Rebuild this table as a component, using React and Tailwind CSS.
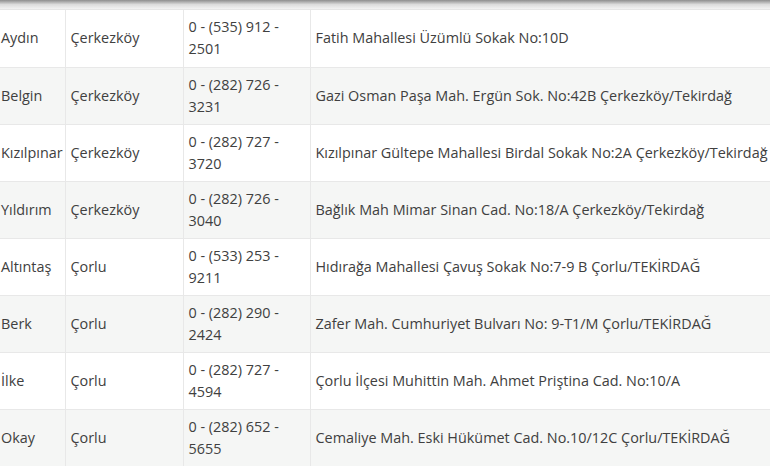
import React from 'react';

const rows = [
  ['Aydın', 'Çerkezköy', '0 - (535) 912 - 2501', 'Fatih Mahallesi Üzümlü Sokak No:10D'],
  ['Belgin', 'Çerkezköy', '0 - (282) 726 - 3231', 'Gazi Osman Paşa Mah. Ergün Sok. No:42B Çerkezköy/Tekirdağ'],
  ['Kızılpınar', 'Çerkezköy', '0 - (282) 727 - 3720', 'Kızılpınar Gültepe Mahallesi Birdal Sokak No:2A Çerkezköy/Tekirdağ'],
  ['Yıldırım', 'Çerkezköy', '0 - (282) 726 - 3040', 'Bağlık Mah Mimar Sinan Cad. No:18/A Çerkezköy/Tekirdağ'],
  ['Altıntaş', 'Çorlu', '0 - (533) 253 - 9211', 'Hıdırağa Mahallesi Çavuş Sokak No:7-9 B Çorlu/TEKİRDAĞ'],
  ['Berk', 'Çorlu', '0 - (282) 290 - 2424', 'Zafer Mah. Cumhuriyet Bulvarı No: 9-T1/M Çorlu/TEKİRDAĞ'],
  ['İlke', 'Çorlu', '0 - (282) 727 - 4594', 'Çorlu İlçesi Muhittin Mah. Ahmet Priştina Cad. No:10/A'],
  ['Okay', 'Çorlu', '0 - (282) 652 - 5655', 'Cemaliye Mah. Eski Hükümet Cad. No.10/12C Çorlu/TEKİRDAĞ'],
];

const App = () => {
  return (
    <div className="w-[770px] h-[466px] overflow-hidden bg-white font-['Open_Sans',sans-serif] text-[14.4px] leading-[22px] text-[#404040]">
      {/* header shadow */}
      <div className="h-[10px] bg-gradient-to-b from-[#8e8e8e] via-[#dcdcdc] to-[#f3f3f3] border-b border-[#e6e6e6]" />

      <table className="table-fixed border-collapse w-[900px]">
        <colgroup>
          <col className="w-[65px]" />
          <col className="w-[118px]" />
          <col className="w-[127px]" />
          <col className="w-[590px]" />
        </colgroup>
        <tbody>
          {rows.map((r, i) => (
            <tr key={i} className={`h-[57px] ${i % 2 === 1 ? 'bg-[#f5f6f5]' : 'bg-white'}`}>
              <td className="pl-[1px] pr-0 align-middle border-b border-r border-[#e8e8e8] whitespace-nowrap">{r[0]}</td>
              <td className="px-[5px] align-middle border border-t-0 border-[#e8e8e8]">{r[1]}</td>
              <td className="px-[5px] align-middle border border-t-0 border-[#e8e8e8]">{r[2]}</td>
              <td className="px-[5px] align-middle border-b border-l border-[#e8e8e8] whitespace-nowrap">{r[3]}</td>
            </tr>
          ))}
        </tbody>
      </table>
    </div>
  );
};

export default App;
